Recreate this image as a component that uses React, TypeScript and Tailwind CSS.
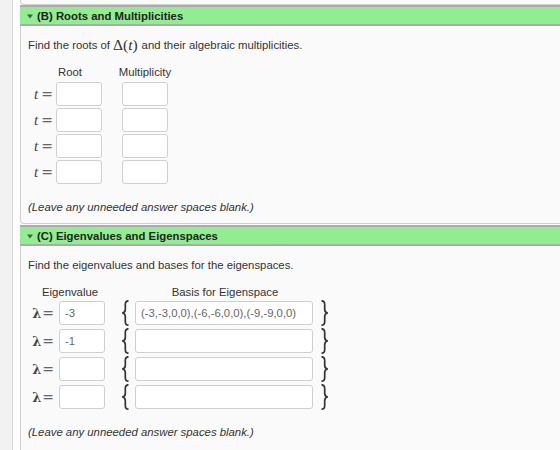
import React from "react";

const Tri = () => (
  <svg width="6" height="5" viewBox="0 0 6 5" className="mr-[4px] mt-[1px]">
    <path d="M0 0.5 L6 0.5 L3 4.5 Z" fill="#555" />
  </svg>
);

const Brace = ({ right }: { right?: boolean }) => (
  <svg width="9" height="26" viewBox="0 0 9 26" className={right ? "scale-x-[-1]" : ""}>
    <path
      d="M7.5 0.8 C5 0.8 4.3 2 4.3 4.5 L4.3 9.5 C4.3 11.8 3.4 12.7 1.2 13 C3.4 13.3 4.3 14.2 4.3 16.5 L4.3 21.5 C4.3 24 5 25.2 7.5 25.2"
      fill="none"
      stroke="#333"
      strokeWidth="1.7"
    />
  </svg>
);

const Box = ({ w, v }: { w: string; v?: string }) => (
  <div
    className={`${w} h-[24px] bg-white border border-[#cfcfcf] rounded-[3px] pl-[5px] flex items-center text-[11.3px] text-[#666]`}
  >
    {v}
  </div>
);

const Header = ({ title }: { title: string }) => (
  <div className="h-[21px] bg-[#90ee90] border-y-2 border-[#ababab] flex items-center pl-[7px] font-bold text-[#222]">
    <Tri />
    <span>{title}</span>
  </div>
);

const TEq = () => (
  <div className="w-[28px] flex items-center justify-end pr-[3px] text-[#444]">
    <span className="font-['Liberation_Serif',serif] italic text-[15px] leading-none mr-[3px]">t</span>
    <span className="font-['DejaVu_Serif',serif] text-[14px] leading-none text-[#666]">=</span>
  </div>
);

const LEq = () => (
  <div className="w-[31px] flex items-center justify-end pr-[5px] text-[#444]">
    <span className="font-['DejaVu_Serif',serif] font-bold text-[13px] leading-none mr-[1px]">λ</span>
    <span className="font-['DejaVu_Serif',serif] text-[14px] leading-none text-[#666]">=</span>
  </div>
);

export default function App() {
  const evs = ["-3", "-1", "", ""];
  const bases = ["(-3,-3,0,0),(-6,-6,0,0),(-9,-9,0,0)", "", "", ""];
  return (
    <div className="w-[560px] h-[450px] overflow-hidden bg-[#f2f2f2] pl-[12px] font-['Liberation_Sans',Arial,sans-serif] text-[11.35px] leading-[14px] text-[#333]">
      <div className="h-full border-l border-[#d6d6d6] bg-[#fdfdfd] pl-[7px]">
        <div className="h-[5px] border-l border-b border-[#d0d0d0] rounded-bl-[4px] bg-[#fafafa]" />
        <Header title="(B) Roots and Multiplicities" />
        <div className="border-l border-b border-[#d0d0d0] rounded-bl-[4px] bg-[#fafafa] pl-[7px] pt-[12px] pb-[9px]">
          <div className="h-[14px] flex items-center">
            <span>Find the roots of</span>
            <span className="font-['Liberation_Serif',serif] text-[15.5px] ml-[3px] mr-[4px]">
              Δ(<i>t</i>)
            </span>
            <span>and their algebraic multiplicities.</span>
          </div>
          <div className="mt-[13px] h-[14px] flex">
            <div className="w-[84px] text-center">Root</div>
            <div className="w-[66px] text-center">Multiplicity</div>
          </div>
          <div className="mt-[2px] flex flex-col">
            {[0, 1, 2, 3].map((i) => (
              <div key={i} className="h-[26px] flex items-center">
                <TEq />
                <Box w="w-[46px]" />
                <div className="w-[20px]" />
                <Box w="w-[46px]" />
              </div>
            ))}
          </div>
          <div className="mt-[15px] h-[14px] italic">(Leave any unneeded answer spaces blank.)</div>
        </div>
        <div className="mt-[1px]">
          <Header title="(C) Eigenvalues and Eigenspaces" />
        </div>
        <div className="border-l border-[#d0d0d0] bg-[#fafafa] pl-[7px] pt-[12px] pb-[20px]">
          <div className="h-[14px]">Find the eigenvalues and bases for the eigenspaces.</div>
          <div className="mt-[13px] h-[14px] flex">
            <div className="w-[84px] text-center">Eigenvalue</div>
            <div className="w-[226px] text-center">Basis for Eigenspace</div>
          </div>
          <div className="flex flex-col">
            {[0, 1, 2, 3].map((i) => (
              <div key={i} className="h-[28px] flex items-center">
                <LEq />
                <Box w="w-[46px]" v={evs[i]} />
                <div className="w-[16px]" />
                <Brace />
                <div className="w-[5px]" />
                <Box w="w-[178px]" v={bases[i]} />
                <div className="w-[7px]" />
                <Brace right />
              </div>
            ))}
          </div>
          <div className="mt-[14px] h-[14px] italic">(Leave any unneeded answer spaces blank.)</div>
        </div>
      </div>
    </div>
  );
}
